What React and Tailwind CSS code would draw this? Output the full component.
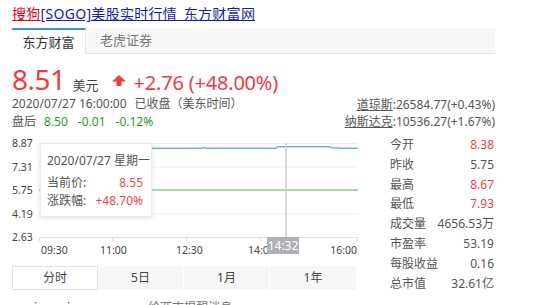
export default function App() {
  const stats = [
    ["今开", "8.38", true],
    ["昨收", "5.75", false],
    ["最高", "8.67", true],
    ["最低", "7.93", true],
    ["成交量", "4656.53万", false],
    ["市盈率", "53.19", false],
    ["每股收益", "0.16", false],
    ["总市值", "32.61亿", false],
  ];
  const grid = [10.5, 34, 57.5, 81];
  const ylabels = [
    ["8.87", 10.5],
    ["7.31", 34],
    ["5.75", 57.5],
    ["4.19", 81],
    ["2.63", 104.5],
  ];
  const ticks = [27.5, 100.5, 174.5, 248.5, 345.5];
  return (
    <div className="w-[550px] h-[305px] overflow-hidden bg-white text-[#333] font-['Noto_Sans','Noto_Sans_CJK_SC',sans-serif]">
      <div className="pl-[12px]">
        {/* title */}
        <div className="h-[28px] flex items-center text-[14px] leading-[28px] tracking-[0.3px]">
          <span className="text-[#e60012] underline">搜狗</span>
          <span className="text-[#1a1aa6] underline">[SOGO]美股实时行情_东方财富网</span>
        </div>
        {/* source tabs */}
        <div className="w-[483px] h-[26px] bg-[#f8f8f8] border-b border-[#e3e3e3] flex text-[13px]">
          <div className="w-[74px] h-[26px] bg-white border-t-2 border-[#3d8ef0] border-r border-r-[#e6e6e6] flex items-center justify-center text-[#333] leading-none">
            东方财富
          </div>
          <div className="w-[80px] h-[25px] flex items-center justify-center text-[#777] leading-none">
            老虎证券
          </div>
        </div>
        {/* price */}
        <div className="mt-[9px] h-[32px] flex items-baseline leading-[32px] whitespace-nowrap">
          <span className="text-[28px] text-[#f03c3c] tracking-[-0.5px]">8.51</span>
          <span className="ml-[7px] text-[13px] text-[#444]">美元</span>
          <svg className="ml-[13px] self-center mt-[2px]" width="14" height="11" viewBox="0 0 14 11">
            <path d="M7 0 L14 6.5 L9.5 6.5 L9.5 11 L4.5 11 L4.5 6.5 L0 6.5 Z" fill="#f03c3c" />
          </svg>
          <span className="ml-[8px] text-[20px] text-[#f03c3c] tracking-[-0.2px]">+2.76 (+48.00%)</span>
        </div>
        <div className="w-[483px] flex justify-between items-end text-[12px] whitespace-nowrap">
          <div>
            <div className="h-[17px] leading-[17px] text-[#555]">
              2020/07/27 16:00:00<span className="ml-[8px]">已收盘</span>（美东时间）
            </div>
            <div className="h-[19px] leading-[19px] flex">
              <span className="text-[#555]">盘后</span>
              <span className="ml-[8px] text-[#1e9e1e]">8.50</span>
              <span className="ml-[10px] text-[#1e9e1e]">-0.01</span>
              <span className="ml-[10px] text-[#1e9e1e]">-0.12%</span>
            </div>
          </div>
          <div className="text-right text-[#555] mb-[1px]">
            <div className="h-[17px] leading-[17px]">
              <span className="underline">道琼斯</span>:26584.77(+0.43%)
            </div>
            <div className="h-[17px] leading-[17px]">
              <span className="underline">纳斯达克</span>:10536.27(+1.67%)
            </div>
          </div>
        </div>
        {/* chart + stats */}
        <div className="mt-[2px] flex items-start gap-[32px]">
          <div className="w-[346px]">
            <div className="relative w-[346px] h-[125px]">
              <svg className="absolute inset-0" width="346" height="125" viewBox="0 0 346 125">
                {grid.map((y) => (
                  <line key={y} x1="27" x2="346" y1={y} y2={y} stroke="#ededed" strokeWidth="1" />
                ))}
                <line x1="27" x2="346" y1="104.5" y2="104.5" stroke="#e2e2e2" strokeWidth="1" />
                {ticks.map((x) => (
                  <line key={x} x1={x} x2={x} y1="104.5" y2="108" stroke="#dcdcdc" strokeWidth="1" />
                ))}
                <line x1="27" x2="346" y1="57" y2="57" stroke="#8fcf8f" strokeWidth="1.6" />
                <polyline
                  fill="none"
                  stroke="#74a9f2"
                  strokeWidth="1.4"
                  points="28,17 60,16 100,15.5 190,15.3 192,14.3 194,15.3 264,15.3 266,13.7 318,13.7 320,15 322,14.6 328,15.2 346,15.2"
                />
                <line x1="274" x2="274" y1="10" y2="104" stroke="#cfcfcf" strokeWidth="1.6" />
              </svg>
              {ylabels.map(([t, y]) => (
                <div
                  key={t}
                  className="absolute left-0 text-[10.5px] leading-[12px] text-[#444]"
                  style={{ top: y - 6.5 }}
                >
                  {t}
                </div>
              ))}
              <div className="absolute left-[29px] top-[111px] text-[10.5px] leading-[12px] text-[#444]">09:30</div>
              <div className="absolute left-[88px] top-[111px] w-[24px] text-center text-[10.5px] leading-[12px] text-[#444]">11:00</div>
              <div className="absolute left-[164px] top-[111px] w-[24px] text-center text-[10.5px] leading-[12px] text-[#444]">12:30</div>
              <div className="absolute left-[236px] top-[111px] w-[24px] text-center text-[10.5px] leading-[12px] text-[#444]">14:00</div>
              <div className="absolute right-[1px] top-[111px] text-[10.5px] leading-[12px] text-[#444]">16:00</div>
              <div className="absolute left-[255px] top-[104px] w-[32px] h-[17px] bg-[#adb0b7] text-white text-[12px] leading-[17px] text-center">
                14:32
              </div>
              {/* tooltip */}
              <div className="absolute left-[28px] top-[10px] w-[112px] h-[74px] bg-white border border-[#ececec] shadow-[0_1px_5px_rgba(0,0,0,0.12)] pl-[6px] pr-[8px] pt-[8px] text-[12px] leading-[18px] text-[#555] whitespace-nowrap">
                <div className="mb-[4px]">2020/07/27 星期一</div>
                <div className="flex justify-between">
                  <span>当前价:</span>
                  <span className="text-[#f24444]">8.55</span>
                </div>
                <div className="flex justify-between">
                  <span>涨跌幅:</span>
                  <span className="text-[#f24444]">+48.70%</span>
                </div>
              </div>
            </div>
            {/* period tabs */}
            <div className="mt-[8px] w-[344px] h-[24px] flex bg-[#f7f7f7] text-[12px] text-[#444]">
              <div className="w-[86px] h-[24px] bg-white border border-[#e2e2e2] flex items-center justify-center">分时</div>
              <div className="w-[86px] h-[24px] flex items-center justify-center border-r border-white">5日</div>
              <div className="w-[86px] h-[24px] flex items-center justify-center border-r border-white">1月</div>
              <div className="w-[86px] h-[24px] flex items-center justify-center">1年</div>
            </div>
            <div className="mt-[10px] flex text-[12px] leading-[16px] text-[#777] whitespace-nowrap">
              <span className="ml-[22px] text-[#333]">i</span>
              <span className="ml-[30px] text-[#333]">i</span>
              <span className="ml-[78px]">给两市提醒消息</span>
            </div>
          </div>
          <div className="w-[104px] mt-[2px] text-[12px] text-[#555]">
            {stats.map(([k, v, r]) => (
              <div key={k} className="h-[19.8px] leading-[19.8px] flex justify-between whitespace-nowrap">
                <span>{k}</span>
                <span className={r ? "text-[#f24444]" : "text-[#555]"}>{v}</span>
              </div>
            ))}
          </div>
        </div>
      </div>
    </div>
  );
}
